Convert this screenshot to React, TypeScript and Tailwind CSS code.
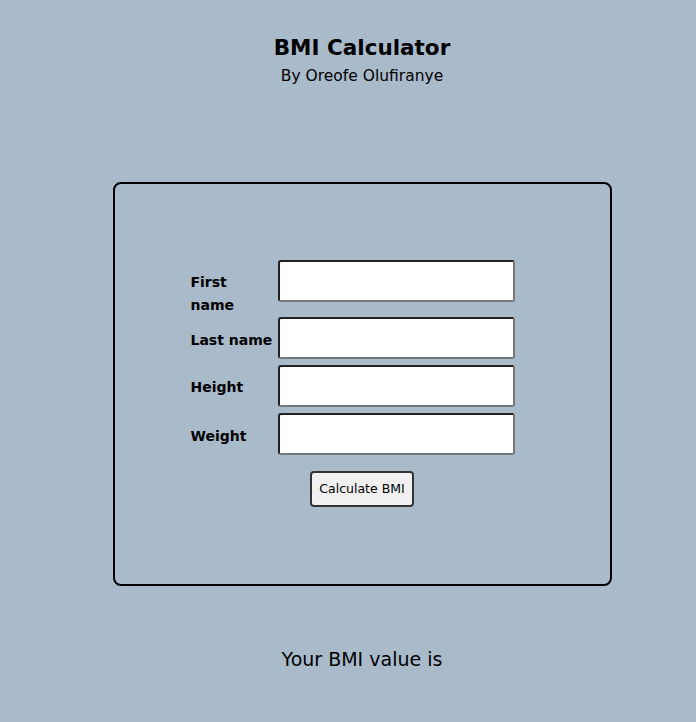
const font = { fontFamily: '"Comic Sans MS", "DejaVu Sans", sans-serif' };

function Field({ label }: { label: string }) {
  return (
    <input
      type="text"
      aria-label={label}
      className="w-[237px] h-[42px] bg-white rounded-[3px] border-2 border-t-[#222] border-l-[#222] border-b-[#767676] border-r-[#767676] outline-none px-2"
    />
  );
}

export default function App() {
  return (
    <div
      className="min-h-screen w-full bg-[#a9bacb] text-black pl-[28px] flex flex-col items-center pt-[34px]"
      style={font}
    >
      <h1 className="text-[21.5px] font-bold leading-[28px]">BMI Calculator</h1>
      <p className="text-[15.5px] leading-[28px]">By Oreofe Olufiranye</p>

      <div className="mt-[92px] w-[499px] h-[404px] border-2 border-black rounded-lg flex flex-col">
        <div className="ml-[76px] mt-[76px] flex flex-col">
          <div className="flex items-start h-[57px]">
            <label className="w-[87px] mt-[11px] text-[14px] font-bold leading-[23px]">
              First
              <br />
              name
            </label>
            <Field label="First name" />
          </div>
          <div className="flex items-start h-[48px]">
            <label className="w-[87px] mt-[12px] text-[14px] font-bold leading-[23px] whitespace-nowrap">
              Last name
            </label>
            <Field label="Last name" />
          </div>
          <div className="flex items-start h-[48px]">
            <label className="w-[87px] mt-[11px] text-[14px] font-bold leading-[23px]">
              Height
            </label>
            <Field label="Height" />
          </div>
          <div className="flex items-start h-[42px]">
            <label className="w-[87px] mt-[12px] text-[14px] font-bold leading-[23px]">
              Weight
            </label>
            <Field label="Weight" />
          </div>
        </div>
        <div className="flex justify-center mt-[16px]">
          <button className="w-[104px] h-[36px] bg-[#f0f0f0] border-2 border-[#333] rounded-[4px] text-[12.5px] leading-none">
            Calculate BMI
          </button>
        </div>
      </div>

      <p className="mt-[59px] text-[19px] leading-[28px]">Your BMI value is</p>
    </div>
  );
}
